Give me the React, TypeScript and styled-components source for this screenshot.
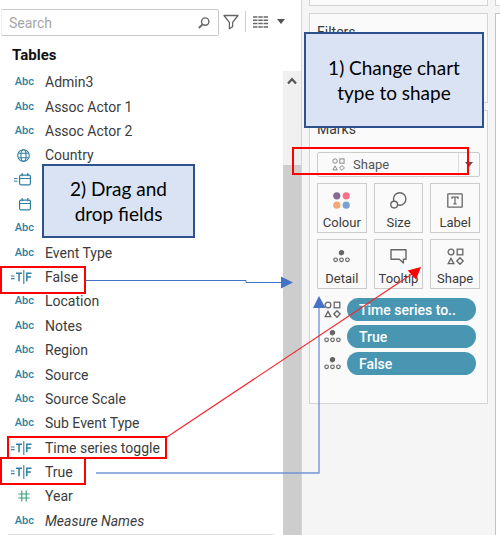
import React from "react";
import styled, { createGlobalStyle } from "styled-components";

const TEAL = "#2f7f9e";
const GREY = "#666";

const GlobalStyle = createGlobalStyle`
  *, *::before, *::after { box-sizing: border-box; }
  body { margin: 0; background: #fff; font-family: Roboto, "Liberation Sans", sans-serif; font-size: 14px; color: #3c3c3c; }
  button, input { font: inherit; color: inherit; margin: 0; padding: 0; }
`;

const Workspace = styled.main`
  position: relative;
  display: grid;
  grid-template-columns: 301px 194px minmax(0, 1fr);
  min-height: 100vh;
  overflow: hidden;
`;

/* ---------- data pane ---------- */

const DataPane = styled.aside`
  display: flex;
  flex-direction: column;
  background: #fff;
`;

const SearchBar = styled.div`
  display: flex;
  align-items: center;
  height: 27px;
  margin-top: 9px;
`;

const SearchField = styled.label`
  display: flex;
  align-items: center;
  width: 218px;
  height: 27px;
  margin-left: 1px;
  padding: 0 8px 0 7px;
  border: 1px solid #c9c9c9;
  border-left-color: #eee;
  border-radius: 0 2px 2px 0;
`;

const SearchInput = styled.input`
  flex: 1;
  min-width: 0;
  border: 0;
  outline: 0;
  background: transparent;
  &::placeholder { color: #a6a6a6; opacity: 1; }
`;

const IconButton = styled.button<{ $width: number }>`
  display: flex;
  align-items: center;
  justify-content: center;
  width: ${(p) => p.$width}px;
  height: 22px;
  padding-bottom: 2px;
  border: 0;
  background: transparent;
`;

const Divider = styled.span`
  width: 1px;
  height: 21px;
  margin: 0 3px 2px 2px;
  background: #ccc;
`;

const PaneTitle = styled.h2`
  margin: 9px 0 0 12px;
  font-size: 15px;
  line-height: 20px;
  font-weight: 700;
  color: #111;
`;

const FieldArea = styled.div`
  display: flex;
  flex: 1;
  margin-top: 5px;
`;

const FieldColumn = styled.div`
  flex: 1;
  padding-right: 9px;
`;

const FieldList = styled.ul`
  display: grid;
  grid-template-rows: repeat(19, 1fr);
  height: 463px;
  margin: 0;
  padding: 0;
  list-style: none;
`;

const FieldRow = styled.li<{ $italic?: boolean }>`
  display: grid;
  grid-template-columns: 34px 1fr;
  column-gap: 11px;
  align-items: center;
  line-height: 20px;
  font-style: ${(p) => (p.$italic ? "italic" : "normal")};
`;

const FieldType = styled.span<{ $inset: number }>`
  display: flex;
  align-items: center;
  justify-content: flex-end;
  padding-right: ${(p) => p.$inset}px;
  color: ${TEAL};
  font-size: 11px;
  font-style: normal;
  font-weight: 500;
`;

const ListEnd = styled.hr`
  height: 2px;
  margin: 1px 0 0 8px;
  border: 0;
  background: #ddd;
`;

const ScrollTrack = styled.div`
  display: flex;
  flex-direction: column;
  width: 18px;
  margin-top: 1px;
  background: #f0f0f0;
`;

const ScrollUp = styled.button`
  display: flex;
  align-items: center;
  justify-content: center;
  height: 20px;
  border: 0;
  background: transparent;
`;

const ScrollThumb = styled.div`
  flex: 1;
  margin-top: 74px;
  background: #cdcdcd;
`;

/* ---------- shelves ---------- */

const Shelves = styled.section`
  display: flex;
  flex-direction: column;
  gap: 7px;
  padding: 0 7px;
  border-left: 1px solid #d4d4d4;
  background: #f5f5f5;
`;

const Card = styled.section<{ $height: number }>`
  height: ${(p) => p.$height}px;
  padding: 8px 7px 0;
  border: 1px solid #d4d4d4;
  background: #fafafa;
`;

const TopCard = styled.div`
  height: 6px;
  border: 1px solid #d4d4d4;
  border-top: 0;
  background: #fafafa;
`;

const CardTitle = styled.h3`
  margin: 0;
  font-size: 14px;
  font-weight: 400;
  line-height: 20px;
`;

const MarkType = styled.button`
  display: flex;
  align-items: center;
  width: 100%;
  height: 25px;
  margin-top: 13px;
  padding-left: 14px;
  border: 1px solid #ccc;
  border-radius: 2px;
  background: #fafafa;
  font-size: 13px;
  text-align: left;
  color: #555;
`;

const MarkName = styled.span`
  flex: 1;
  padding-left: 8px;
`;

const MarkCaret = styled.span`
  display: flex;
  align-items: center;
  justify-content: center;
  width: 21px;
  height: 23px;
  border-left: 1px solid #ddd;
`;

const MarkGrid = styled.div`
  display: grid;
  grid-template-columns: repeat(3, 1fr);
  gap: 6px 7px;
  margin-top: 6px;
`;

const MarkButton = styled.button`
  display: flex;
  flex-direction: column;
  align-items: center;
  gap: 2px;
  height: 50px;
  padding-top: 4px;
  border: 1px solid #ccc;
  background: #fafafa;
  font-size: 13px;
  line-height: 18px;
`;

const Encodings = styled.ul`
  display: flex;
  flex-direction: column;
  gap: 4px;
  margin: 9px 0 0;
  padding: 0 4px 0 6px;
  list-style: none;
`;

const Encoding = styled.li`
  display: flex;
  align-items: center;
  gap: 5px;
`;

const Pill = styled.button`
  flex: 1;
  height: 23px;
  padding-left: 12px;
  border: 0;
  border-radius: 12px;
  background: #4996b2;
  color: #fff;
  text-align: left;
  font-weight: 500;
`;

const Canvas = styled.section`
  display: flex;
  flex-direction: column;
  gap: 7px;
  background: #f5f5f5;
`;

const CanvasTop = styled.div`
  height: 6px;
  border: 1px solid #d4d4d4;
  border-width: 0 0 1px 1px;
  background: #fff;
`;

const CanvasBody = styled.div`
  flex: 1;
  border: 1px solid #c4c4c4;
  border-width: 1px 0 0 1px;
  background: #fff;
`;

/* ---------- annotations laid over the workspace ---------- */

type Box = { $x: number; $y: number; $w: number; $h: number };

const Highlight = styled.div<Box>`
  position: absolute;
  left: ${(p) => p.$x}px;
  top: ${(p) => p.$y}px;
  width: ${(p) => p.$w}px;
  height: ${(p) => p.$h}px;
  border: 2px solid #f00;
  pointer-events: none;
`;

const Callout = styled.p<Box>`
  position: absolute;
  left: ${(p) => p.$x}px;
  top: ${(p) => p.$y}px;
  display: flex;
  align-items: center;
  justify-content: center;
  width: ${(p) => p.$w}px;
  height: ${(p) => p.$h}px;
  margin: 0;
  border: 2px solid #2f528f;
  background: #dae3f3;
  color: #000;
  font: 19px/25px Lato, "Open Sans", sans-serif;
  text-align: center;
`;

const Arrows = styled.svg`
  position: absolute;
  left: 0;
  top: 0;
  pointer-events: none;
`;

/* ---------- icons ---------- */

const Caret = () => (
  <svg width="8" height="5" viewBox="0 0 8 5"><path d="M0 0h8L4 5z" fill="#555" /></svg>
);

const SearchIcon = () => (
  <svg width="12" height="12" viewBox="0 0 12 12" fill="none" stroke="#666" strokeWidth="1.4">
    <circle cx="7.2" cy="4.6" r="3.7" /><path d="M4.5 7.3L.8 11" strokeWidth="1.8" />
  </svg>
);

const FilterIcon = () => (
  <svg width="16" height="16" viewBox="0 0 16 16" fill="none" stroke="#666" strokeWidth="1.3">
    <path d="M1 1.5h14L9.6 8.4v4.3L6.4 14.6V8.4z" strokeLinejoin="round" />
  </svg>
);

const ListIcon = () => (
  <svg width="15" height="12" viewBox="0 0 15 12" stroke="#666" strokeWidth="1.5">
    <path d="M0 1h15M0 4.3h15M0 7.6h15M0 10.9h15" strokeDasharray="4.400 .9" />
  </svg>
);

const GlobeIcon = () => (
  <svg width="13" height="13" viewBox="0 0 13 13" fill="none" stroke={TEAL} strokeWidth="1.1">
    <circle cx="6.5" cy="6.5" r="5.8" /><ellipse cx="6.5" cy="6.5" rx="2.6" ry="5.8" />
    <path d="M1.4 4.3h10.2M1.4 8.7h10.2" />
  </svg>
);

const CalendarIcon = ({ calculated = false }) => (
  <svg width="17" height="13" viewBox="0 0 17 13" fill="none" stroke={TEAL} strokeWidth="1.2">
    <rect x="5.6" y="2.2" width="10.8" height="9.6" rx="1.2" /><path d="M5.6 5.5h10.8M8.2 0v3.2M13.8 0v3.2" />
    {calculated && <path d="M0 5.6h3.6M0 8.2h3.6" strokeWidth="1" />}
  </svg>
);

const HashIcon = () => (
  <svg width="12" height="12" viewBox="0 0 12 12" fill="none" stroke="#3fa37c" strokeWidth="1.2">
    <path d="M3.8.5v11M8.2.5v11M.3 4h11.4M.3 8h11.4" />
  </svg>
);

const BooleanIcon = () => (
  <svg width="21" height="14" viewBox="0 0 21 14" fill="none" stroke={TEAL}>
    <path d="M0 6h3.6M0 8.6h3.6" strokeWidth="1.1" />
    <path d="M5 3.2h6M8 3.2v8" strokeWidth="1.5" />
    <path d="M12.8 0v14" strokeWidth="1.1" />
    <path d="M15.8 11.2v-8h4.7M15.8 7h4.1" strokeWidth="1.5" />
  </svg>
);

const ShapesIcon = ({ size = 17, color = GREY }) => (
  <svg width={size} height={size} viewBox="0 0 17 17" fill="none" stroke={color} strokeWidth="1.3">
    <circle cx="4" cy="4" r="2.9" /><rect x="10.2" y="1.2" width="5.6" height="5.6" />
    <path d="M4 10.4L6.8 15.6H1.2z" /><path d="M13 9.8l3.2 3.2-3.2 3.2L9.8 13z" strokeLinejoin="round" />
  </svg>
);

const DetailIcon = () => (
  <svg width="17" height="13" viewBox="0 0 17 13" fill="none" stroke={GREY} strokeWidth="1.2">
    <circle cx="8.5" cy="2.7" r="2.1" fill={GREY} />
    <circle cx="2.6" cy="9.8" r="1.8" /><circle cx="8.5" cy="9.8" r="1.8" /><circle cx="14.4" cy="9.8" r="1.8" />
  </svg>
);

const IconSlot = styled.span<{ $width: number; $height: number }>`
  display: flex;
  align-items: center;
  justify-content: center;
  width: ${(p) => p.$width}px;
  height: ${(p) => p.$height}px;
`;

const ColourIcon = () => (
  <svg width="17" height="17" viewBox="0 0 17 17">
    <circle cx="3.8" cy="3.8" r="3.6" fill="#866a94" /><circle cx="13.2" cy="3.8" r="3.6" fill="#fa7086" />
    <circle cx="3.8" cy="13.2" r="3.6" fill="#f3a877" /><circle cx="13.2" cy="13.2" r="3.6" fill="#7ba3cd" />
  </svg>
);

const SizeIcon = () => (
  <svg width="17" height="17" viewBox="0 0 17 17" fill="none" stroke={GREY} strokeWidth="1.4">
    <circle cx="9.7" cy="7" r="6.2" /><circle cx="4.2" cy="12.6" r="3.4" fill="#fafafa" />
  </svg>
);

const LabelIcon = () => (
  <svg width="16" height="15" viewBox="0 0 16 15" fill="none" stroke={GREY} strokeWidth="1.3">
    <rect x=".8" y=".8" width="14.4" height="13.4" rx=".6" />
    <path d="M5 6V4.2h6V6M8 4.2v6.6M6.4 10.8h3.2" strokeWidth="1.2" />
  </svg>
);

const TooltipIcon = () => (
  <svg width="17" height="15" viewBox="0 0 17 15" fill="none" stroke={GREY} strokeWidth="1.4">
    <path d="M1 .8h15v9.4h-2.6v3.8L9.4 10.2H1z" strokeLinejoin="round" />
  </svg>
);

/* ---------- content ---------- */

type Kind = "text" | "geo" | "calcDate" | "date" | "bool" | "number";

const fields: { kind: Kind; name?: string; italic?: boolean }[] = [
  { kind: "text", name: "Admin3" },
  { kind: "text", name: "Assoc Actor 1" },
  { kind: "text", name: "Assoc Actor 2" },
  { kind: "geo", name: "Country" },
  { kind: "calcDate" },
  { kind: "date" },
  { kind: "text" },
  { kind: "text", name: "Event Type" },
  { kind: "bool", name: "False" },
  { kind: "text", name: "Location" },
  { kind: "text", name: "Notes" },
  { kind: "text", name: "Region" },
  { kind: "text", name: "Source" },
  { kind: "text", name: "Source Scale" },
  { kind: "text", name: "Sub Event Type" },
  { kind: "bool", name: "Time series toggle" },
  { kind: "bool", name: "True" },
  { kind: "number", name: "Year" },
  { kind: "text", name: "Measure Names", italic: true },
];

const typeIcons: Record<Kind, { icon: React.ReactNode; inset: number }> = {
  text: { icon: "Abc", inset: 0 },
  geo: { icon: <GlobeIcon />, inset: 4 },
  calcDate: { icon: <CalendarIcon calculated />, inset: 3 },
  date: { icon: <CalendarIcon />, inset: 3 },
  bool: { icon: <BooleanIcon />, inset: 2 },
  number: { icon: <HashIcon />, inset: 4 },
};

const marks = [
  { label: "Colour", icon: <ColourIcon /> },
  { label: "Size", icon: <SizeIcon /> },
  { label: "Label", icon: <LabelIcon /> },
  { label: "Detail", icon: <DetailIcon /> },
  { label: "Tooltip", icon: <TooltipIcon /> },
  { label: "Shape", icon: <ShapesIcon /> },
];

const encodings = [
  { label: "Time series to..", icon: <ShapesIcon /> },
  { label: "True", icon: <DetailIcon /> },
  { label: "False", icon: <DetailIcon /> },
];

export default function App() {
  return (
    <>
      <GlobalStyle />
      <Workspace>
        <DataPane>
          <SearchBar>
            <SearchField>
              <SearchInput type="text" placeholder="Search" aria-label="Search" />
              <SearchIcon />
            </SearchField>
            <IconButton $width={24} aria-label="Filter fields"><FilterIcon /></IconButton>
            <Divider />
            <IconButton $width={22} aria-label="View as list"><ListIcon /></IconButton>
            <IconButton $width={20} aria-label="More options"><Caret /></IconButton>
          </SearchBar>
          <PaneTitle>Tables</PaneTitle>
          <FieldArea>
            <FieldColumn>
              <FieldList>
                {fields.map((f, i) => (
                  <FieldRow key={i} $italic={f.italic}>
                    <FieldType $inset={typeIcons[f.kind].inset}>{typeIcons[f.kind].icon}</FieldType>
                    <span>{f.name}</span>
                  </FieldRow>
                ))}
              </FieldList>
              <ListEnd />
            </FieldColumn>
            <ScrollTrack>
              <ScrollUp aria-label="Scroll up">
                <svg width="10" height="8" viewBox="0 0 10 8" fill="none" stroke="#555" strokeWidth="2.2"><path d="M1 6.5l4-4.3 4 4.3" /></svg>
              </ScrollUp>
              <ScrollThumb />
            </ScrollTrack>
          </FieldArea>
        </DataPane>

        <Shelves>
          <TopCard />
          <Card $height={90}><CardTitle>Filters</CardTitle></Card>
          <Card $height={294}>
            <CardTitle>Marks</CardTitle>
            <MarkType aria-haspopup="listbox">
              <ShapesIcon size={13} color="#888" />
              <MarkName>Shape</MarkName>
              <MarkCaret><Caret /></MarkCaret>
            </MarkType>
            <MarkGrid>
              {marks.map((m) => (
                <MarkButton key={m.label}>
                  <IconSlot $width={24} $height={24}>{m.icon}</IconSlot>
                  {m.label}
                </MarkButton>
              ))}
            </MarkGrid>
            <Encodings>
              {encodings.map((e) => (
                <Encoding key={e.label}>
                  <IconSlot $width={19} $height={20}>{e.icon}</IconSlot>
                  <Pill>{e.label}</Pill>
                </Encoding>
              ))}
            </Encodings>
          </Card>
        </Shelves>

        <Canvas>
          <CanvasTop />
          <CanvasBody />
        </Canvas>

        <Arrows width="500" height="535" viewBox="0 0 500 535" fill="none" aria-hidden="true">
          <path d="M86 280.5h160v2h36" stroke="#4472c4" />
          <path d="M281 276.5l12 6-12 6z" fill="#4472c4" />
          <path d="M96 473h223V306" stroke="#7397d6" strokeWidth="1.4" />
          <path d="M313 308l6-12 6.500 12z" fill="#4472c4" />
          <path d="M167 437L412 274" stroke="#f5262c" strokeWidth="1.200" />
          <path d="M421 267l-13.300 3.600 8.300 8.800z" fill="#f00" />
        </Arrows>
        <Highlight $x={0} $y={266} $w={86} $h={28} />
        <Highlight $x={7} $y={436} $w={160} $h={23} />
        <Highlight $x={0} $y={457} $w={86} $h={28} />
        <Highlight $x={292} $y={147} $w={177} $h={28} />
        <Callout $x={304} $y={32} $w={180} $h={96}>1) Change chart<br />type to shape</Callout>
        <Callout $x={42} $y={164} $w={153} $h={74}>2) Drag and<br />drop fields</Callout>
      </Workspace>
    </>
  );
}
